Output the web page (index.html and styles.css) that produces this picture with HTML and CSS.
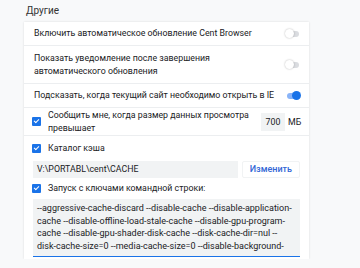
FILE: index.html
```html
<!DOCTYPE html>
<html lang="ru">
<head>
    <meta charset="UTF-8">
    <meta name="viewport" content="width=device-width, initial-scale=1.0">
    <title>Другие</title>
    <link rel="stylesheet" href="styles.css">
</head>
<body>
    <h2 class="titulo">Другие</h2>
    <div class="cartao">
        <div class="linha">
            <span class="texto">Включить автоматическое обновление Cent Browser</span>
            <span class="chave"></span>
        </div>
        <div class="linha dupla">
            <span class="texto">Показать уведомление после завершения<br>автоматического обновления</span>
            <span class="chave"></span>
        </div>
        <div class="linha">
            <span class="texto">Подсказать, когда текущий сайт необходимо открыть в IE</span>
            <span class="chave ligada"></span>
        </div>
        <div class="linha limite">
            <span class="marca"></span>
            <span class="texto">Сообщить мне, когда размер данных просмотра<br>превышает</span>
            <span class="numero">700</span>
            <span class="unidade">МБ</span>
        </div>
        <div class="linha sem-borda">
            <span class="marca"></span>
            <span class="texto">Каталог кэша</span>
        </div>
        <div class="caminho">
            <span class="campo">V:\PORTABL\cent\CACHE</span>
            <button class="botao">Изменить</button>
        </div>
        <div class="linha sem-borda curta">
            <span class="marca"></span>
            <span class="texto">Запуск с ключами командной строки:</span>
        </div>
        <div class="moldura">
            <textarea class="comandos">--aggressive-cache-discard --disable-cache --disable-application-cache --disable-offline-load-stale-cache --disable-gpu-program-cache --disable-gpu-shader-disk-cache --disk-cache-dir=nul --disk-cache-size=0 --media-cache-size=0 --disable-background-networking --disable-sync</textarea>
        </div>
    </div>
</body>
</html>
```

FILE: styles.css
```css
body {
    margin: 0;
    background: #f8f9fa;
    font-family: Roboto, "Liberation Sans", sans-serif;
    color: #202124;
    font-size: 8.8px;
}
.titulo {
    font-size: 10px;
    font-weight: normal;
    margin: 0;
    padding: 4px 0 0 26px;
    height: 18px;
    line-height: 13px;
    color: #333;
}
.cartao {
    margin-left: 24px;
    width: 285px;
    background: white;
    box-shadow: 0 0 2px rgba(0, 0, 0, 0.12);
    padding-bottom: 2px;
}
.linha {
    display: flex;
    align-items: center;
    height: 23px;
    padding: 0 9px 0 10px;
    border-bottom: 1px solid #eceef0;
}
.linha.dupla {
    height: 37px;
}
.linha.limite {
    height: 27px;
}
.linha.sem-borda {
    height: 24px;
    border-bottom: none;
}
.linha.curta {
    height: 21px;
}
.texto {
    flex: 1;
    line-height: 12.5px;
    white-space: nowrap;
}
.chave {
    position: relative;
    width: 12px;
    height: 6px;
    border-radius: 3px;
    background: #dadce0;
    margin-right: 1px;
}
.chave::after {
    content: "";
    position: absolute;
    left: -2px;
    top: -2px;
    width: 9px;
    height: 9px;
    border-radius: 50%;
    background: white;
    box-shadow: 0 0 2px rgba(0, 0, 0, 0.3);
}
.chave.ligada {
    background: #8ab4f8;
}
.chave.ligada::after {
    left: 5px;
    background: #1a73e8;
    box-shadow: none;
}
.marca {
    width: 9px;
    height: 9px;
    border-radius: 1px;
    background: #1a73e8;
    margin: 0 7px 0 -2px;
    position: relative;
}
.marca::after {
    content: "";
    position: absolute;
    left: 3px;
    top: 1px;
    width: 2px;
    height: 4px;
    border: solid white;
    border-width: 0 1.5px 1.5px 0;
    transform: rotate(45deg);
}
.numero {
    background: #f1f3f4;
    width: 24px;
    height: 18px;
    line-height: 18px;
    text-align: center;
    margin-right: 3px;
}
.unidade {
    width: 12px;
}
.caminho {
    display: flex;
    align-items: center;
    padding: 0 9px 0 9px;
    height: 18px;
}
.campo {
    flex: 1;
    background: #f1f3f4;
    height: 17px;
    line-height: 17px;
    padding-left: 4px;
}
.botao {
    background: white;
    border: 1px solid #f1f3f4;
    color: #3367d6;
    font-family: Roboto, "Liberation Sans", sans-serif;
    font-size: 9px;
    font-weight: 500;
    padding: 0 7px;
    height: 17px;
    margin-left: 4px;
    border-radius: 2px;
}
.moldura {
    box-sizing: border-box;
    width: 267px;
    height: 58px;
    margin-left: 9px;
    background: #f1f3f4;
    border-bottom: 1px solid #1a73e8;
}
.comandos {
    display: block;
    box-sizing: border-box;
    width: 100%;
    height: 54px;
    margin: 0;
    background: transparent;
    border: none;
    font-family: Roboto, "Liberation Sans", sans-serif;
    font-size: 9px;
    line-height: 12.5px;
    color: #202124;
    padding: 3px 4px 0;
    resize: none;
    overflow-y: scroll;
}
.comandos::-webkit-scrollbar {
    width: 6px;
}
.comandos::-webkit-scrollbar-thumb {
    background: #c1c1c1;
}
```
